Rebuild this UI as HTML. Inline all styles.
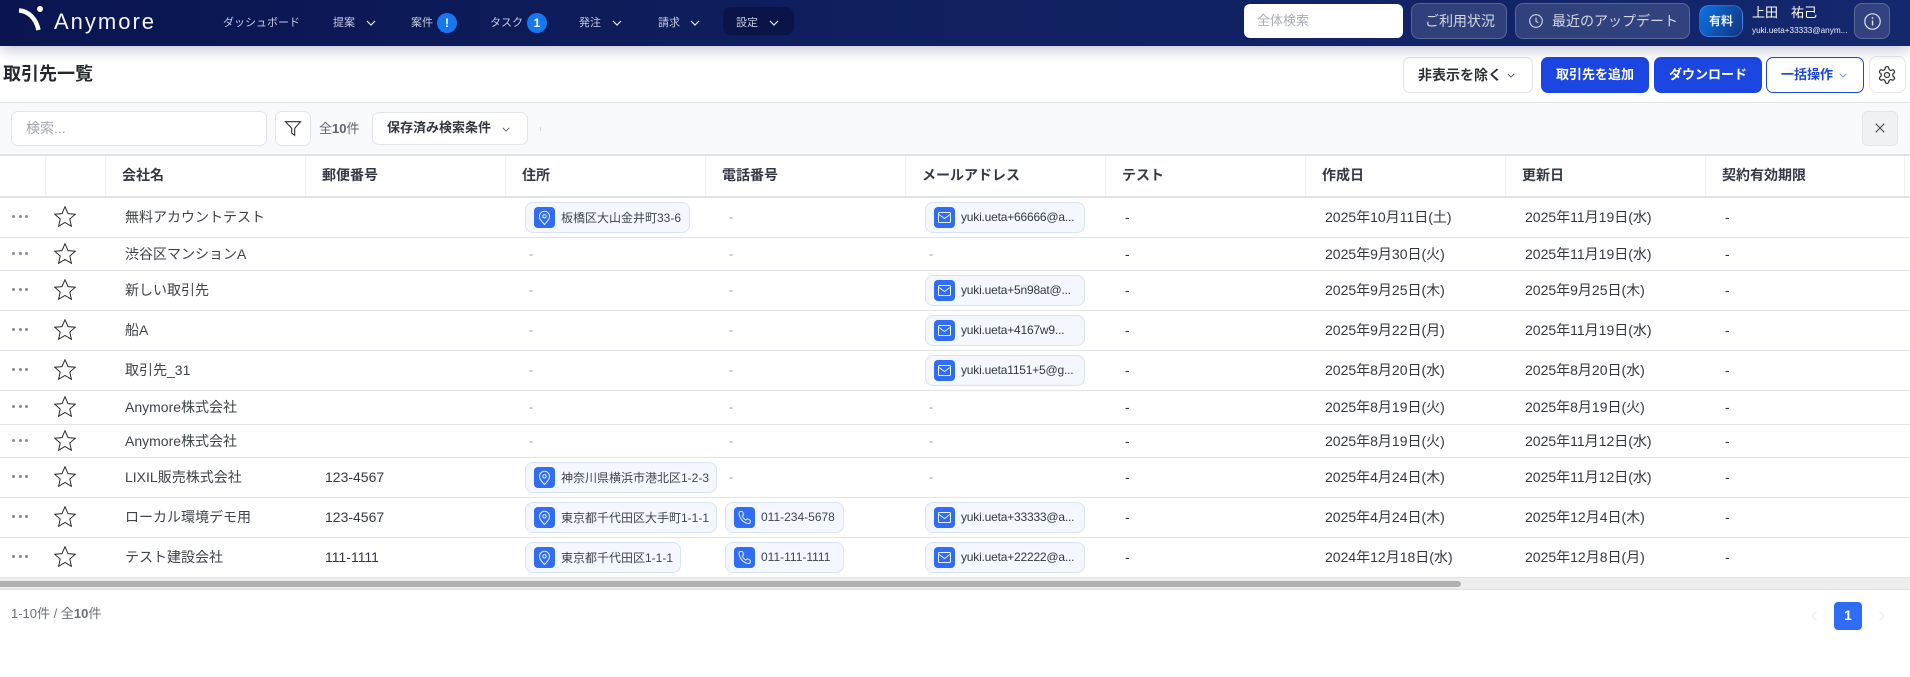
<!DOCTYPE html>
<html lang="ja">
<head>
<meta charset="utf-8">
<title>取引先一覧</title>
<style>
*{box-sizing:border-box}
html,body{margin:0;padding:0;width:1910px;height:677px;overflow:hidden;background:#fff;font-family:"Liberation Sans","Noto Sans CJK JP",sans-serif;color:#3c4048}
.ab{position:absolute}
svg{display:block;overflow:visible}
#hd{position:absolute;left:0;top:0;width:1910px;height:46px;background:linear-gradient(90deg,#0a1550 0%,#0f1f5f 45%,#14286e 100%);box-shadow:0 3px 14px rgba(20,30,90,.28);z-index:3}
.nav{position:absolute;top:15px;font-size:11px;line-height:16px;color:#c6cade;white-space:nowrap}
.bdg{position:absolute;top:13px;width:20px;height:20px;border-radius:50%;background:#1677ee;color:#fff;font-size:12px;font-weight:700;line-height:20px;text-align:center}
.hb{position:absolute;top:3px;height:36px;border-radius:8px;background:rgba(255,255,255,.13);border:1px solid rgba(255,255,255,.2);color:#d3d7e6;font-size:14px;line-height:34px;white-space:nowrap}
.btn{position:absolute;top:57px;height:36px;border-radius:7px;font-size:13px;font-weight:700;line-height:34px;white-space:nowrap}
.fb{position:absolute;background:#fff;border:1px solid #e2e4ea;border-radius:7px}
.th{position:absolute;top:156px;height:40px;line-height:39px;font-size:14px;font-weight:700;color:#333a45;white-space:nowrap}
.vd{position:absolute;top:156px;height:40px;width:1px;background:#eef0f3}
.r{position:absolute;left:0;width:1910px;border-bottom:1px solid #e2e4e9}
.r>span,.r>div{position:absolute;top:0;bottom:0;display:flex;align-items:center;font-size:14px;white-space:nowrap;padding-bottom:2px}
.r.s>span{padding-bottom:0}
.r>.dots{left:12px}
.dots i{display:block;width:3px;height:3px;border-radius:50%;background:#8a8d94;margin-right:3.5px}
.r>.st{left:54px}
.n{left:125px;color:#3f434b}
.p{left:325px;color:#33373f}
.x{left:1125px;color:#333}
.d1{left:1325px;color:#33373f}
.d2{left:1525px;color:#33373f}
.l{left:1725px;color:#333}
.r>.ds{font-size:12px;color:#8b95a5}
.r>.chip{top:50%;bottom:auto;margin:-16px 0 0 0;height:31px;display:flex;align-items:center;background:#f4f7ff;border:1px solid #d9e3f9;border-radius:8px;padding:0 0 0 8px;font-size:12px;color:#40444c;overflow:hidden}
.r>.em{letter-spacing:-.2px;color:#33373f}
.ic{width:21px;height:21px;border-radius:4px;background:#2f6df6;margin-right:6px;flex:none}
</style>
</head>
<body>
<svg width="0" height="0" style="position:absolute">
<symbol id="star" viewBox="0 0 22 21"><polygon points="11,.7 14,7.6 21.3,8.2 15.8,13 17.4,20.3 11,16.5 4.6,20.3 6.2,13 .7,8.2 8,7.6" fill="none" stroke="#2a2a2a" stroke-width="1"/></symbol>
<symbol id="pin" viewBox="0 0 21 21"><path d="M10.5 17.5c-3-3.2-5-5.5-5-8.2a5 5 0 0 1 10 0c0 2.7-2 5-5 8.2z" fill="none" stroke="#e8efff" stroke-width="1"/><circle cx="10.5" cy="9.3" r="1.7" fill="none" stroke="#e8efff" stroke-width="1"/></symbol>
<symbol id="mail" viewBox="0 0 21 21"><rect x="4.5" y="5.5" width="12" height="10" rx="1" fill="none" stroke="#e8efff" stroke-width="1"/><path d="M5 7.5l5.5 4 5.5-4" fill="none" stroke="#e8efff" stroke-width="1"/></symbol>
<symbol id="tel" viewBox="0 0 21 21"><path d="M6.5 4.5l1.8 0 1.4 3.2-1.4 1.2c.7 1.8 2 3.3 3.6 4.2l1.3-1.4 3 1.5v2c0 .8-.7 1.4-1.5 1.3C9 15.8 5.2 11 5 6c0-.8.7-1.5 1.5-1.5z" fill="none" stroke="#e8efff" stroke-width="1"/></symbol>
<symbol id="chv" viewBox="0 0 10 6"><path d="M1 1l4 4 4-4" fill="none" stroke="currentColor" stroke-width="1.2"/></symbol>
</svg>

<div id="hd">
  <svg class="ab" style="left:18px;top:5px" width="28" height="27" viewBox="0 0 28 27"><path d="M1 5.500C10 6 18 13 20.500 25" fill="none" stroke="#fff" stroke-width="4.500"/><circle cx="22" cy="4" r="3" fill="#fff"/></svg>
  <div class="ab" style="left:54px;top:9px;font-size:22px;line-height:26px;letter-spacing:2px;color:#f2f3f8">Anymore</div>

  <div class="nav" style="left:223px">ダッシュボード</div>
  <div class="nav" style="left:333px">提案</div>
  <svg class="ab" style="left:366px;top:20px;color:#e8eaf2" width="10" height="6"><use href="#chv"/></svg>
  <div class="nav" style="left:411px">案件</div>
  <div class="bdg" style="left:437px">!</div>
  <div class="nav" style="left:490px">タスク</div>
  <div class="bdg" style="left:527px">1</div>
  <div class="nav" style="left:579px">発注</div>
  <svg class="ab" style="left:612px;top:20px;color:#e8eaf2" width="10" height="6"><use href="#chv"/></svg>
  <div class="nav" style="left:658px">請求</div>
  <svg class="ab" style="left:690px;top:20px;color:#e8eaf2" width="10" height="6"><use href="#chv"/></svg>
  <div class="ab" style="left:723px;top:7px;width:71px;height:28px;border-radius:8px;background:#0b1448"></div>
  <div class="nav" style="left:736px">設定</div>
  <svg class="ab" style="left:769px;top:20px;color:#e8eaf2" width="10" height="6"><use href="#chv"/></svg>

  <div class="ab" style="left:1244px;top:4px;width:159px;height:34px;background:#fff;border-radius:6px;padding-left:13px;font-size:13px;line-height:33px;color:#a8acb4">全体検索</div>
  <div class="hb" style="left:1411px;width:96px;padding-left:13px">ご利用状況</div>
  <div class="hb" style="left:1515px;width:175px;padding-left:36px">最近のアップデート</div>
  <svg class="ab" style="left:1529px;top:14px" width="14" height="14" viewBox="0 0 14 14"><circle cx="7" cy="7" r="6.300" fill="none" stroke="#d3d7e6" stroke-width="1.100"/><path d="M7 3.500V7.300l2.300 1.400" fill="none" stroke="#d3d7e6" stroke-width="1.100"/></svg>
  <div class="ab" style="left:1699px;top:5px;width:44px;height:32px;border-radius:10px;background:linear-gradient(120deg,#0c72e6 0%,#12357f 100%);border:1px solid rgba(255,255,255,.18);color:#e8eefa;font-size:12px;font-weight:700;line-height:30px;text-align:center">有料</div>
  <div class="ab" style="left:1752px;top:5px;font-size:13px;line-height:16px;color:#fff;white-space:pre">上田　祐己</div>
  <div class="ab" style="left:1752px;top:25px;font-size:8.2px;line-height:11px;color:#eef0f7;white-space:nowrap">yuki.ueta+33333@anym...</div>
  <div class="hb" style="left:1854px;width:36px"></div>
  <svg class="ab" style="left:1864px;top:13px" width="17" height="17" viewBox="0 0 17 17"><circle cx="8.500" cy="8.500" r="7.700" fill="none" stroke="#e2e5f0" stroke-width="1.200"/><path d="M8.500 7.500v5" stroke="#e2e5f0" stroke-width="1.400"/><circle cx="8.500" cy="5" r=".9" fill="#e2e5f0"/></svg>
</div>

<div class="ab" style="left:3px;top:62px;font-size:18px;font-weight:700;line-height:24px;color:#24272d">取引先一覧</div>

<div class="btn" style="left:1403px;width:130px;background:#fff;border:1px solid #e2e4ea;font-size:14px;color:#2e3238;padding-left:14px">非表示を除く</div>
<svg class="ab" style="left:1507px;top:73px;color:#555" width="8" height="5" viewBox="0 0 10 6"><use href="#chv"/></svg>
<div class="btn" style="left:1541px;width:108px;background:#1c46e2;color:#fff;text-align:center;line-height:36px">取引先を追加</div>
<div class="btn" style="left:1654px;width:108px;background:#1c46e2;color:#fff;text-align:center;line-height:36px">ダウンロード</div>
<div class="btn" style="left:1766px;width:98px;background:#fff;border:1px solid #1c46e2;color:#1c46e2;padding-left:14px">一括操作</div>
<svg class="ab" style="left:1839px;top:73px;color:#6f8cf0" width="8" height="5" viewBox="0 0 10 6"><use href="#chv"/></svg>
<div class="ab" style="left:1869px;top:56px;width:37px;height:37px;background:#fff;border:1px solid #e4e6ea;border-radius:8px"></div>
<svg class="ab" style="left:1877px;top:65px" width="20" height="20" viewBox="0 0 24 24"><path d="M12.220 2h-.44a2 2 0 0 0-2 2v.18a2 2 0 0 1-1 1.730l-.43.25a2 2 0 0 1-2 0l-.15-.08a2 2 0 0 0-2.730.73l-.22.38a2 2 0 0 0 .73 2.730l.15.1a2 2 0 0 1 1 1.720v.51a2 2 0 0 1-1 1.740l-.15.09a2 2 0 0 0-.73 2.730l.22.38a2 2 0 0 0 2.730.73l.15-.08a2 2 0 0 1 2 0l.43.25a2 2 0 0 1 1 1.730V20a2 2 0 0 0 2 2h.44a2 2 0 0 0 2-2v-.18a2 2 0 0 1 1-1.730l.43-.25a2 2 0 0 1 2 0l.15.08a2 2 0 0 0 2.730-.73l.22-.39a2 2 0 0 0-.73-2.730l-.15-.08a2 2 0 0 1-1-1.740v-.5a2 2 0 0 1 1-1.740l.15-.09a2 2 0 0 0 .73-2.730l-.22-.38a2 2 0 0 0-2.730-.73l-.15.08a2 2 0 0 1-2 0l-.43-.25a2 2 0 0 1-1-1.730V4a2 2 0 0 0-2-2z" fill="none" stroke="#2f3440" stroke-width="1.500"/><circle cx="12" cy="12" r="3" fill="none" stroke="#2f3440" stroke-width="1.500"/></svg>

<!-- filter bar -->
<div class="ab" style="left:0;top:102px;width:1910px;height:54px;background:#f8f9fb;border-top:1px solid #e2e4ea;border-bottom:2px solid #e2e2e9"></div>
<div class="fb" style="left:11px;top:111px;width:256px;height:35px;padding-left:14px;font-size:14px;line-height:32px;color:#a3a7b0">検索...</div>
<div class="fb" style="left:275px;top:111px;width:36px;height:35px"></div>
<svg class="ab" style="left:285px;top:121px" width="16" height="15" viewBox="0 0 16 15"><path d="M.5.700h15l-5.800 6.600v7l-3-2.200V7.300z" fill="none" stroke="#2b2f36" stroke-width="1.100"/></svg>
<div class="ab" style="left:319px;top:120px;font-size:13px;line-height:18px;color:#5e636c">全<b style="font-weight:700">10</b>件</div>
<div class="fb" style="left:372px;top:112px;width:156px;height:33px;padding-left:14px;font-size:13px;font-weight:700;line-height:30px;color:#33373f">保存済み検索条件</div>
<svg class="ab" style="left:502px;top:127px;color:#666" width="8" height="5" viewBox="0 0 10 6"><use href="#chv"/></svg>
<div class="ab" style="left:540px;top:127px;width:1px;height:4px;background:#d5d7dc"></div>
<div class="ab" style="left:1862px;top:111px;width:36px;height:35px;background:#f0f1f3;border:1px solid #e2e4e8;border-radius:5px"></div>
<svg class="ab" style="left:1875px;top:123px" width="10" height="10" viewBox="0 0 10 10"><path d="M.7.700l8.600 8.600M9.300.700L.7 9.300" stroke="#4a4e58" stroke-width="1.100"/></svg>

<!-- table header -->
<div class="ab" style="left:0;top:196px;width:1910px;height:2px;background:#e2e2e9"></div>
<div class="vd" style="left:45px"></div><div class="vd" style="left:105px"></div><div class="vd" style="left:305px"></div><div class="vd" style="left:505px"></div><div class="vd" style="left:705px"></div><div class="vd" style="left:905px"></div><div class="vd" style="left:1105px"></div><div class="vd" style="left:1305px"></div><div class="vd" style="left:1505px"></div><div class="vd" style="left:1705px"></div><div class="vd" style="left:1904px"></div>
<div class="th" style="left:122px">会社名</div>
<div class="th" style="left:322px">郵便番号</div>
<div class="th" style="left:522px">住所</div>
<div class="th" style="left:722px">電話番号</div>
<div class="th" style="left:922px">メールアドレス</div>
<div class="th" style="left:1122px">テスト</div>
<div class="th" style="left:1322px">作成日</div>
<div class="th" style="left:1522px">更新日</div>
<div class="th" style="left:1722px">契約有効期限</div>

<!-- rows -->
<div class="r" style="top:198px;height:40px">
  <div class="dots"><i></i><i></i><i></i></div><div class="st"><svg width="22" height="21"><use href="#star"/></svg></div>
  <span class="n">無料アカウントテスト</span>
  <div class="chip" style="left:525px;width:165px"><div class="ic"><svg width="21" height="21"><use href="#pin"/></svg></div>板橋区大山金井町33-6</div>
  <span class="ds" style="left:729px">-</span>
  <div class="chip em" style="left:925px;width:160px"><div class="ic"><svg width="21" height="21"><use href="#mail"/></svg></div>yuki.ueta+66666@a...</div>
  <span class="x">-</span><span class="d1">2025年10月11日(土)</span><span class="d2">2025年11月19日(水)</span><span class="l">-</span>
</div>
<div class="r s" style="top:238px;height:33px">
  <div class="dots"><i></i><i></i><i></i></div><div class="st"><svg width="22" height="21"><use href="#star"/></svg></div>
  <span class="n">渋谷区マンションA</span>
  <span class="ds" style="left:529px">-</span><span class="ds" style="left:729px">-</span><span class="ds" style="left:929px">-</span>
  <span class="x">-</span><span class="d1">2025年9月30日(火)</span><span class="d2">2025年11月19日(水)</span><span class="l">-</span>
</div>
<div class="r" style="top:271px;height:40px">
  <div class="dots"><i></i><i></i><i></i></div><div class="st"><svg width="22" height="21"><use href="#star"/></svg></div>
  <span class="n">新しい取引先</span>
  <span class="ds" style="left:529px">-</span><span class="ds" style="left:729px">-</span>
  <div class="chip em" style="left:925px;width:160px"><div class="ic"><svg width="21" height="21"><use href="#mail"/></svg></div>yuki.ueta+5n98at@...</div>
  <span class="x">-</span><span class="d1">2025年9月25日(木)</span><span class="d2">2025年9月25日(木)</span><span class="l">-</span>
</div>
<div class="r" style="top:311px;height:40px">
  <div class="dots"><i></i><i></i><i></i></div><div class="st"><svg width="22" height="21"><use href="#star"/></svg></div>
  <span class="n">船A</span>
  <span class="ds" style="left:529px">-</span><span class="ds" style="left:729px">-</span>
  <div class="chip em" style="left:925px;width:160px"><div class="ic"><svg width="21" height="21"><use href="#mail"/></svg></div>yuki.ueta+4167w9...</div>
  <span class="x">-</span><span class="d1">2025年9月22日(月)</span><span class="d2">2025年11月19日(水)</span><span class="l">-</span>
</div>
<div class="r" style="top:351px;height:40px">
  <div class="dots"><i></i><i></i><i></i></div><div class="st"><svg width="22" height="21"><use href="#star"/></svg></div>
  <span class="n">取引先_31</span>
  <span class="ds" style="left:529px">-</span><span class="ds" style="left:729px">-</span>
  <div class="chip em" style="left:925px;width:160px"><div class="ic"><svg width="21" height="21"><use href="#mail"/></svg></div>yuki.ueta1151+5@g...</div>
  <span class="x">-</span><span class="d1">2025年8月20日(水)</span><span class="d2">2025年8月20日(水)</span><span class="l">-</span>
</div>
<div class="r" style="top:391px;height:34px">
  <div class="dots"><i></i><i></i><i></i></div><div class="st"><svg width="22" height="21"><use href="#star"/></svg></div>
  <span class="n">Anymore株式会社</span>
  <span class="ds" style="left:529px">-</span><span class="ds" style="left:729px">-</span><span class="ds" style="left:929px">-</span>
  <span class="x">-</span><span class="d1">2025年8月19日(火)</span><span class="d2">2025年8月19日(火)</span><span class="l">-</span>
</div>
<div class="r s" style="top:425px;height:33px">
  <div class="dots"><i></i><i></i><i></i></div><div class="st"><svg width="22" height="21"><use href="#star"/></svg></div>
  <span class="n">Anymore株式会社</span>
  <span class="ds" style="left:529px">-</span><span class="ds" style="left:729px">-</span><span class="ds" style="left:929px">-</span>
  <span class="x">-</span><span class="d1">2025年8月19日(火)</span><span class="d2">2025年11月12日(水)</span><span class="l">-</span>
</div>
<div class="r" style="top:458px;height:40px">
  <div class="dots"><i></i><i></i><i></i></div><div class="st"><svg width="22" height="21"><use href="#star"/></svg></div>
  <span class="n">LIXIL販売株式会社</span><span class="p">123-4567</span>
  <div class="chip" style="left:525px;width:192px"><div class="ic"><svg width="21" height="21"><use href="#pin"/></svg></div>神奈川県横浜市港北区1-2-3</div>
  <span class="ds" style="left:729px">-</span><span class="ds" style="left:929px">-</span>
  <span class="x">-</span><span class="d1">2025年4月24日(木)</span><span class="d2">2025年11月12日(水)</span><span class="l">-</span>
</div>
<div class="r" style="top:498px;height:40px">
  <div class="dots"><i></i><i></i><i></i></div><div class="st"><svg width="22" height="21"><use href="#star"/></svg></div>
  <span class="n">ローカル環境デモ用</span><span class="p">123-4567</span>
  <div class="chip" style="left:525px;width:192px"><div class="ic"><svg width="21" height="21"><use href="#pin"/></svg></div>東京都千代田区大手町1-1-1</div>
  <div class="chip" style="left:725px;width:119px"><div class="ic"><svg width="21" height="21"><use href="#tel"/></svg></div>011-234-5678</div>
  <div class="chip em" style="left:925px;width:160px"><div class="ic"><svg width="21" height="21"><use href="#mail"/></svg></div>yuki.ueta+33333@a...</div>
  <span class="x">-</span><span class="d1">2025年4月24日(木)</span><span class="d2">2025年12月4日(木)</span><span class="l">-</span>
</div>
<div class="r" style="top:538px;height:40px">
  <div class="dots"><i></i><i></i><i></i></div><div class="st"><svg width="22" height="21"><use href="#star"/></svg></div>
  <span class="n">テスト建設会社</span><span class="p">111-1111</span>
  <div class="chip" style="left:525px;width:156px"><div class="ic"><svg width="21" height="21"><use href="#pin"/></svg></div>東京都千代田区1-1-1</div>
  <div class="chip" style="left:725px;width:119px"><div class="ic"><svg width="21" height="21"><use href="#tel"/></svg></div>011-111-1111</div>
  <div class="chip em" style="left:925px;width:160px"><div class="ic"><svg width="21" height="21"><use href="#mail"/></svg></div>yuki.ueta+22222@a...</div>
  <span class="x">-</span><span class="d1">2024年12月18日(水)</span><span class="d2">2025年12月8日(月)</span><span class="l">-</span>
</div>

<!-- scrollbar -->
<div class="ab" style="left:0;top:578px;width:1910px;height:12px;background:#ededed;border-bottom:1px solid #e0e0e0"></div>
<div class="ab" style="left:0;top:581px;width:1461px;height:6px;background:#b1b1b1;border-radius:0 3px 3px 0"></div>

<!-- footer -->
<div class="ab" style="left:11px;top:605px;font-size:13px;line-height:18px;color:#6b7078">1-10件 / 全<b>10</b>件</div>
<svg class="ab" style="left:1811px;top:611px" width="6" height="10" viewBox="0 0 6 10"><path d="M5.500.500L1 5l4.500 4.500" fill="none" stroke="#eceef2" stroke-width="1.100"/></svg>
<div class="ab" style="left:1834px;top:602px;width:28px;height:28px;background:#2f6df6;border-radius:4px;color:#fff;font-size:14px;font-weight:700;line-height:26px;text-align:center">1</div>
<svg class="ab" style="left:1879px;top:611px" width="6" height="10" viewBox="0 0 6 10"><path d="M.5.500L5 5 .5 9.500" fill="none" stroke="#eceef2" stroke-width="1.100"/></svg>
</body>
</html>
